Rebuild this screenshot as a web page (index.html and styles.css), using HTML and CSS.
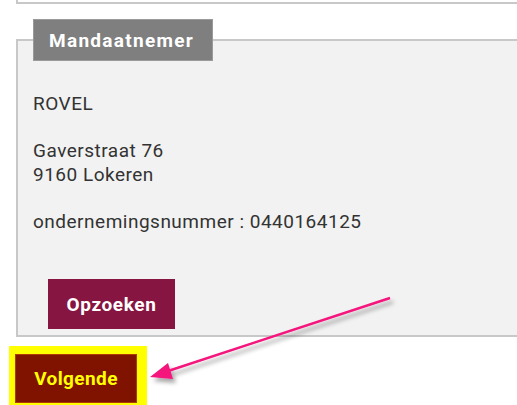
FILE: index.html
```html
<!DOCTYPE html>
<html lang="nl">
<head>
    <meta charset="UTF-8">
    <title>Mandaatnemer</title>
    <link rel="stylesheet" href="styles.css">
</head>
<body>
    <div class="prev-panel"></div>

    <fieldset class="panel">
        <legend class="panel-title">Mandaatnemer</legend>
        <p>ROVEL</p>
        <p>Gaverstraat 76<br>9160 Lokeren</p>
        <p>ondernemingsnummer : 0440164125</p>
        <button class="btn btn-search">Opzoeken</button>
    </fieldset>

    <div class="highlight">
        <button class="btn btn-next">Volgende</button>
    </div>

    <!-- annotation arrow -->
    <svg class="arrow" width="517" height="405" viewBox="0 0 517 405">
        <defs>
            <filter id="shadow" x="-10%" y="-30%" width="130%" height="180%">
                <feDropShadow dx="3" dy="4" stdDeviation="2" flood-color="#000" flood-opacity="0.35"/>
            </filter>
        </defs>
        <g filter="url(#shadow)">
            <line x1="390" y1="298" x2="162" y2="373" stroke="#f4147c" stroke-width="2.5"/>
            <polygon points="150,377 168,363 173,379" fill="#f4147c"/>
        </g>
    </svg>
</body>
</html>
```

FILE: styles.css
```css
body {
    font-family: Roboto, 'Liberation Sans', sans-serif;
    margin: 0;
    background-color: #ffffff;
    color: #333333;
    overflow: hidden;
    position: relative;
    height: 405px;
}

.prev-panel {
    margin-left: 16px;
    margin-right: -20px;
    height: 2px;
    border-left: 2px solid #c8c8c8;
    border-bottom: 2px solid #c8c8c8;
}

.panel {
    margin: 15px -20px 0 16px;
    padding: 31px 0 6px 15px;
    background-color: #f2f2f2;
    border: 2px solid #c8c8c8;
    border-right: none;
}

.panel-title {
    margin-left: 0;
    padding: 0 18px 0 15px;
    height: 42px;
    line-height: 42px;
    background-color: #7f7f7f;
    border: 1px solid #9a9a9a;
    box-sizing: border-box;
    color: #ffffff;
    font-size: 19px;
    font-weight: bold;
    letter-spacing: 1.3px;
}

.panel p {
    margin: 0 0 23px;
    font-size: 19px;
    line-height: 24px;
    letter-spacing: 0.5px;
}

.btn {
    font-family: Roboto, 'Liberation Sans', sans-serif;
    font-size: 19px;
    font-weight: bold;
    letter-spacing: 0.6px;
    border: none;
    cursor: pointer;
}

.btn-search {
    display: block;
    margin: 45px 0 0 15px;
    width: 127px;
    height: 50px;
    background-color: #861541;
    color: #ffffff;
}

.highlight {
    display: inline-block;
    margin: 9px 0 0 9px;
    padding: 8px 10px 3px 6px;
    background-color: #ffff00;
}

.btn-next {
    display: block;
    width: 122px;
    height: 49px;
    background-color: #801200;
    border: 1px solid #b03a00;
    color: #ffff00;
    letter-spacing: 0.4px;
}

.arrow {
    position: absolute;
    left: 0;
    top: 0;
}
```
